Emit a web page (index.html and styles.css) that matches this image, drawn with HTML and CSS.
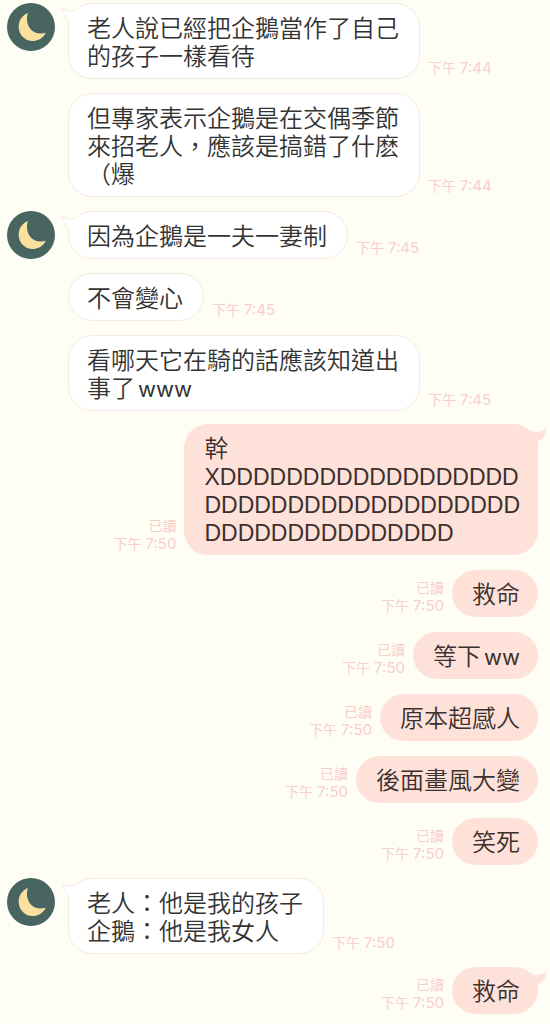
FILE: index.html
```html
<!DOCTYPE html>
<html lang="zh-Hant">
<head>
<meta charset="utf-8">
<meta name="viewport" content="width=device-width, initial-scale=1">
<title>聊天</title>
<link rel="stylesheet" href="styles.css">
</head>
<body>
<svg class="defs" aria-hidden="true">
  <symbol id="moon" viewBox="0 0 48 48">
    <circle cx="24" cy="24" r="24" fill="#496561"/>
    <path d="M21 10C14.500 12.500 11 18.500 11.800 25.500C12.800 33.500 19.500 38.700 27 38C32 37.500 36.500 34.500 38.700 29.800C33 31.500 27.500 30.500 23.800 26.500C20 22 19 15.500 21 10Z" fill="#fbe1a0"/>
  </symbol>
  <symbol id="tail-in" viewBox="0 0 20 22">
    <path d="M16 1.500C12 5 4 5 .8 .6C2 6.500 4.500 10.500 7.500 12.500V21H20V1.500Z" fill="#fff"/>
    <path d="M16 1.500C12 5 4 5 .8 .6C2 6.500 4.500 10.500 7.500 12.500V21" fill="none" stroke="#f6e8e5"/>
  </symbol>
  <symbol id="tail-out" viewBox="0 0 16 22">
    <path d="M0 3.500C4 6 11 6 15.500 .5C15.500 7 12 12 7 14.500V22H0Z" fill="#fee2da"/>
  </symbol>
</svg>
<main class="chat">
  <section class="group incoming">
    <div class="message">
      <svg class="avatar" role="img" aria-label="月亮"><use href="#moon"/></svg>
      <p class="bubble"><svg class="tail" aria-hidden="true"><use href="#tail-in"/></svg>老人說已經把企鵝當作了自己<br>的孩子一樣看待</p>
      <div class="meta"><time>下午<span>7:44</span></time></div>
    </div>
    <div class="message">
      <p class="bubble">但專家表示企鵝是在交偶季節<br>來招老人，應該是搞錯了什麽<br>（爆</p>
      <div class="meta"><time>下午<span>7:44</span></time></div>
    </div>
    <div class="message">
      <svg class="avatar" role="img" aria-label="月亮"><use href="#moon"/></svg>
      <p class="bubble"><svg class="tail" aria-hidden="true"><use href="#tail-in"/></svg>因為企鵝是一夫一妻制</p>
      <div class="meta"><time>下午<span>7:45</span></time></div>
    </div>
    <div class="message">
      <p class="bubble">不會變心</p>
      <div class="meta"><time>下午<span>7:45</span></time></div>
    </div>
    <div class="message">
      <p class="bubble">看哪天它在騎的話應該知道出<br>事了<span class="latin">www</span></p>
      <div class="meta"><time>下午<span>7:45</span></time></div>
    </div>
  </section>

  <section class="group outgoing">
    <div class="message">
      <div class="meta"><span class="read">已讀</span><time>下午<span>7:50</span></time></div>
      <p class="bubble"><svg class="tail" aria-hidden="true"><use href="#tail-out"/></svg>幹<br><span class="capitals">XDDDDDDDDDDDDDDDDDD<br>DDDDDDDDDDDDDDDDDDD<br>DDDDDDDDDDDDDDD</span></p>
    </div>
    <div class="message">
      <div class="meta"><span class="read">已讀</span><time>下午<span>7:50</span></time></div>
      <p class="bubble">救命</p>
    </div>
    <div class="message">
      <div class="meta"><span class="read">已讀</span><time>下午<span>7:50</span></time></div>
      <p class="bubble">等下<span class="latin">ww</span></p>
    </div>
    <div class="message">
      <div class="meta"><span class="read">已讀</span><time>下午<span>7:50</span></time></div>
      <p class="bubble">原本超感人</p>
    </div>
    <div class="message">
      <div class="meta"><span class="read">已讀</span><time>下午<span>7:50</span></time></div>
      <p class="bubble">後面畫風大變</p>
    </div>
    <div class="message">
      <div class="meta"><span class="read">已讀</span><time>下午<span>7:50</span></time></div>
      <p class="bubble">笑死</p>
    </div>
  </section>

  <section class="group incoming">
    <div class="message">
      <svg class="avatar" role="img" aria-label="月亮"><use href="#moon"/></svg>
      <p class="bubble"><svg class="tail" aria-hidden="true"><use href="#tail-in"/></svg>老人：他是我的孩子<br>企鵝：他是我女人</p>
      <div class="meta"><time>下午<span>7:50</span></time></div>
    </div>
  </section>

  <section class="group outgoing">
    <div class="message">
      <div class="meta"><span class="read">已讀</span><time>下午<span>7:50</span></time></div>
      <p class="bubble"><svg class="tail" aria-hidden="true"><use href="#tail-out"/></svg>救命</p>
    </div>
  </section>
</main>
</body>
</html>
```
FILE: styles.css
```css
* {
  box-sizing: border-box;
}

body {
  margin: 0;
  background: #fffef5;
  color: #333;
  font-family: "Noto Sans CJK TC", "Liberation Sans", sans-serif;
  font-size: 24px;
  font-weight: 350;
  line-height: 28px;
}

.defs {
  display: none;
}

.chat {
  display: flex;
  flex-direction: column;
  gap: 13px;
  padding: 3px 12px 10px 7px;
}

.group {
  display: flex;
  flex-direction: column;
}

.incoming {
  gap: 14px;
}

.outgoing {
  gap: 15px;
}

.message {
  display: grid;
  align-items: end;
  column-gap: 8px;
}

.incoming .message {
  grid-template-columns: 53px auto 1fr;
}

.outgoing .message {
  grid-template-columns: 1fr auto;
}

.avatar {
  grid-column: 1;
  align-self: start;
  width: 48px;
  height: 48px;
}

.bubble {
  position: relative;
  margin: 0;
  padding: 9px 20px 9px 18px;
  border-radius: 24px;
}

.incoming .bubble {
  grid-column: 2;
  border: 1px solid #f6e8e5;
  background: #fff;
}

.outgoing .bubble {
  padding: 9px 18px 10px 20px;
  background: #fee2da;
  color: #3b302e;
}

.latin {
  margin-left: 3px;
  font-family: Inter, "Liberation Sans", sans-serif;
  font-size: 22px;
  font-weight: 400;
  line-height: 20px;
}

.capitals {
  font-family: "Liberation Sans", sans-serif;
  font-size: 23px;
  line-height: 20px;
}

.tail {
  position: absolute;
  top: 3px;
  height: 22px;
}

.incoming .tail {
  left: -8px;
  width: 20px;
}

.outgoing .tail {
  right: -9px;
  width: 16px;
}

.meta {
  display: flex;
  flex-direction: column;
  padding-bottom: 2px;
  color: #f8cfcb;
  font-size: 14px;
  font-weight: 400;
  line-height: 18px;
}

.incoming .meta {
  grid-column: 3;
}

.outgoing .meta {
  text-align: right;
}

.meta time span {
  margin-left: 4px;
  font-family: Inter, "Liberation Sans", sans-serif;
  font-size: 15px;
}
```
